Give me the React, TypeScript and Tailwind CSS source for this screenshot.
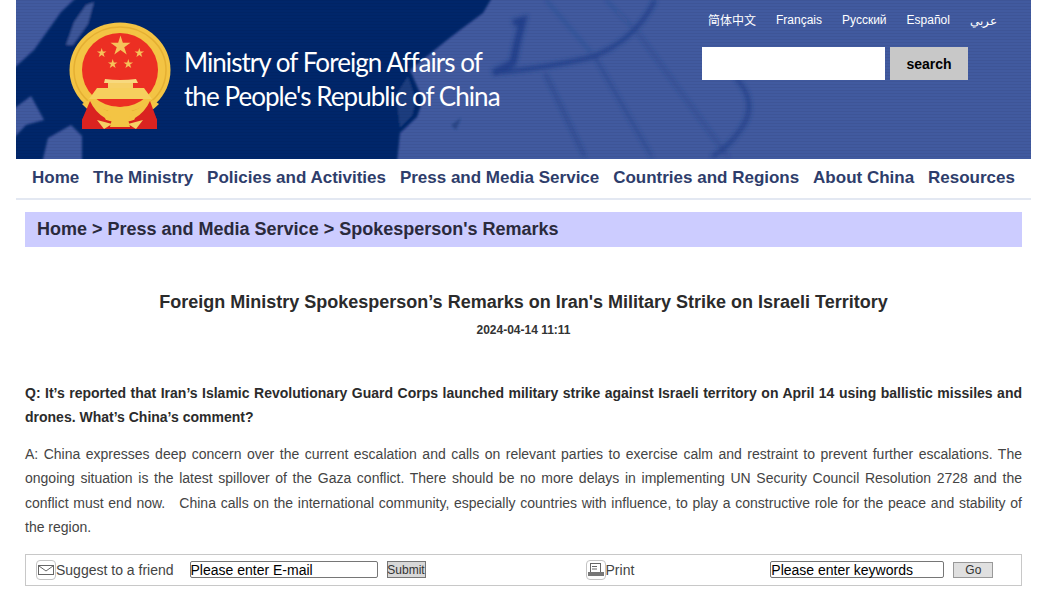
const LANGS = [
  { label: "简体中文", cls: "mt-[13px]" },
  { label: "Français", cls: "mt-[12px]" },
  { label: "Русский", cls: "mt-[12px]" },
  { label: "Español", cls: "mt-[12px]" },
  { label: "عربي", cls: "mt-[13px]" },
];

const NAV = ["Home", "The Ministry", "Policies and Activities", "Press and Media Service", "Countries and Regions", "About China", "Resources"];

function Star({ x, y, r, fill = "#f6c35a" }: { x: number; y: number; r: number; fill?: string }) {
  const pts = [];
  for (let i = 0; i < 10; i++) {
    const a = -Math.PI / 2 + (i * Math.PI) / 5;
    const rr = i % 2 ? r * 0.38 : r;
    pts.push(`${x + rr * Math.cos(a)},${y + rr * Math.sin(a)}`);
  }
  return <polygon points={pts.join(" ")} fill={fill} />;
}

function Emblem() {
  return (
    <svg width="104" height="110" viewBox="0 0 104 110" className="absolute left-[53px] top-[22px]">
      <path d="M22 80 L13 98 L13 107 L88 107 L88 98 L80 80 Z" fill="#d61f1c" />
      <ellipse cx="51" cy="48" rx="50.5" ry="47.5" fill="#f3c444" />
      <ellipse cx="51" cy="48" rx="46" ry="43" fill="none" stroke="#e5b033" strokeWidth="1.5" />
      <ellipse cx="51" cy="48" rx="38" ry="37" fill="#ec2f23" />
      <Star x={51.5} y={24} r={10.5} />
      <Star x={32.7} y={31} r={5} />
      <Star x={70.3} y={31} r={5} />
      <Star x={43.7} y={42} r={5} />
      <Star x={59.3} y={42} r={5} />
      <path d="M36 57 Q51 59 67 57 L69 61 L35 61 Z" fill="#f8d97e" />
      <rect x="39" y="61" width="25" height="5" fill="#f6cf66" />
      <path d="M28 66 L75 66 L83 77 L20 77 Z" fill="#f6cf5e" />
      <path d="M28 83 Q51 100 75 83 L84 78 L90 82 Q72 100 51 100 Q30 100 13 82 L20 78 Z" fill="#f3c444" />
      <path d="M13 98 L21 79 Q26 90 36 96 L40 107 L13 107 Z" fill="#da2320" />
      <path d="M88 98 L81 79 Q76 90 66 96 L62 107 L88 107 Z" fill="#da2320" />
      <path d="M28 98 L43 102 L35 107 Z M74 98 L59 102 L67 107 Z" fill="#f6d166" />
      <path d="M38 90 Q44 82 51 86 Q58 82 64 90 L59 97 L61 105 L41 105 L43 97 Z" fill="#f3c444" />
    </svg>
  );
}

function BannerBg() {
  return (
    <svg width="1015" height="159" viewBox="0 0 1015 159" className="absolute inset-0">
      <defs>
        <filter id="soft">
          <feGaussianBlur stdDeviation="1.2" />
        </filter>
        <filter id="softer">
          <feGaussianBlur stdDeviation="2" />
        </filter>
        <pattern id="scan" width="4" height="3" patternUnits="userSpaceOnUse">
          <rect width="4" height="1" fill="#000" opacity="0.05" />
        </pattern>
      </defs>
      <rect width="1015" height="159" fill="#415a9f" />
      <g filter="url(#soft)">
        <path
          d="M-4 70 L18 50 L45 12 L62 -4 L477 -4 L467 13 L444 30 L431 40 L394 70 L407 100 L401 117 L384 133 L381 163 L66 163 L66 136 L55 125 L32 138 L26 163 L-4 163 L-4 140 L10 125 L28 120 L15 96 L-4 110 Z"
          fill="#02266b"
        />
        <path d="M50 45 L58 22 L70 5 L78 2 L72 24 L57 45 Z" fill="#3d5799" />
        <path d="M380 95 L392 76 L400 100 L396 116 L384 128 Z" fill="#2b4788" opacity="0.7" />
      </g>
      <g fill="none" stroke="#23418c" filter="url(#softer)">
        <path d="M497 23 L507 20 L501 43 L497 63 L477 73" strokeWidth="7" />
        <path d="M477 73 Q531 68 576 57 Q620 40 639 0" strokeWidth="4" />
        <path d="M529 73 L569 157" strokeWidth="3" opacity="0.7" />
        <path d="M579 57 L636 157" strokeWidth="3" opacity="0.6" />
        <path d="M622 33 L712 157" strokeWidth="3" opacity="0.45" />
        <path d="M720 78 Q745 105 722 133 Q712 147 696 157" strokeWidth="4" opacity="0.9" />
        <path d="M530 0 L579 57 M590 0 L622 33" strokeWidth="2.5" opacity="0.35" />
      </g>
      <path d="M435 125 L445 118 L440 130 Z" fill="#2a4788" filter="url(#soft)" />
      <rect width="1015" height="159" fill="url(#scan)" />
    </svg>
  );
}

export default function App() {
  return (
    <div className="w-[1049px] h-[602px] overflow-hidden bg-white font-['Liberation_Sans',Arial,sans-serif]">
      <div className="mx-4 w-[1015px]">
        <header className="relative h-[159px] overflow-hidden">
          <BannerBg />
          <Emblem />
          <div className="absolute left-[168px] top-[45px] font-['Lato',sans-serif] text-[26px] leading-[34px] tracking-[-0.95px] text-white">
            <div>Ministry of Foreign Affairs of</div>
            <div>the People's Republic of China</div>
          </div>
          <div className="absolute left-[692px] top-0 flex h-[47px] gap-[20px] text-xs text-white">
            {LANGS.map((l) => (
              <a key={l.label} className={`${l.cls} font-['Liberation_Sans','Noto_Sans_CJK_SC',sans-serif]`}>
                {l.label}
              </a>
            ))}
          </div>
          <div className="absolute left-[686px] top-[47px] flex gap-[5px]">
            <div className="h-[33px] w-[183px] bg-white" />
            <button className="h-[33px] w-[78px] bg-[#c8c8c8] text-sm font-bold text-black">search</button>
          </div>
        </header>

        <nav className="flex h-[41px] items-center justify-between border-b-2 border-[#e3e8f2] px-4 pb-px text-[17px] font-bold text-[#2e3d6b]">
          {NAV.map((n) => (
            <a key={n}>{n}</a>
          ))}
        </nav>

        <main className="mx-[9px] mt-[12px] w-[997px]">
          <div className="flex h-[35px] items-center bg-[#ccccff] pb-[2px] pl-3 text-lg font-bold text-[#2a2a3c]">
            Home &gt; Press and Media Service &gt; Spokesperson's Remarks
          </div>

          <h1 className="mt-[43px] text-center text-lg leading-[24px] font-bold text-[#2b2b2b]">
            Foreign Ministry Spokesperson’s Remarks on Iran's Military Strike on Israeli Territory
          </h1>
          <p className="mt-[8px] text-center text-xs leading-[16px] font-bold text-[#333]">2024-04-14 11:11</p>

          <p className="mt-[43px] text-justify text-sm leading-6 font-bold text-[#2b2b2b]">
            Q: It’s reported that Iran’s Islamic Revolutionary Guard Corps launched military strike against Israeli territory on April 14 using ballistic missiles and drones. What’s China’s comment?
          </p>
          <p className="mt-[13px] text-justify text-sm leading-[24.4px] text-[#444]">
            A: China expresses deep concern over the current escalation and calls on relevant parties to exercise calm and restraint to prevent further escalations. The ongoing situation is the latest spillover of the Gaza conflict. There should be no more delays in implementing UN Security Council Resolution 2728 and the conflict must end now.&nbsp;&nbsp; China calls on the international community, especially countries with influence, to play a constructive role for the peace and stability of the region.
          </p>

          <div className="mt-[14px] flex h-8 items-center border border-[#c8c8c8] pl-[10px] text-sm text-[#444]">
            <span className="flex h-5 w-5 items-center justify-center rounded-sm border border-[#c4c4c4]">
              <svg width="16" height="12" viewBox="0 0 16 12" fill="none" stroke="#666" strokeWidth="1">
                <rect x="0.5" y="1.5" width="15" height="9" />
                <path d="M1 2 L8 7 L15 2" />
              </svg>
            </span>
            <span>Suggest to a friend</span>
            <div className="ml-[16px] flex h-[17px] w-[188px] items-center rounded-[2px] border border-[#767676] text-black">Please enter E-mail</div>
            <button className="ml-[9px] flex h-[17px] w-[39px] items-center justify-center border border-[#767676] bg-[#d8d8d8] text-xs text-[#333]">Submit</button>
            <span className="ml-[160px] flex h-5 w-5 items-center justify-center rounded-sm border border-[#c4c4c4]">
              <svg width="16" height="14" viewBox="0 0 16 14" fill="none">
                <rect x="2.5" y="0.5" width="10" height="9" stroke="#666" />
                <path d="M4 3.5 H9 M4 6 H9" stroke="#666" />
                <rect x="0" y="9" width="16" height="4" fill="#777" />
              </svg>
            </span>
            <span>Print</span>
            <div className="ml-[136px] flex h-[17px] w-[174px] items-center rounded-[2px] border border-[#767676] text-black">Please enter keywords</div>
            <button className="ml-[9px] flex h-[16px] w-[40px] items-center justify-center border border-[#999] bg-[#e0e0e0] text-xs text-[#333]">Go</button>
          </div>
        </main>
      </div>
    </div>
  );
}
